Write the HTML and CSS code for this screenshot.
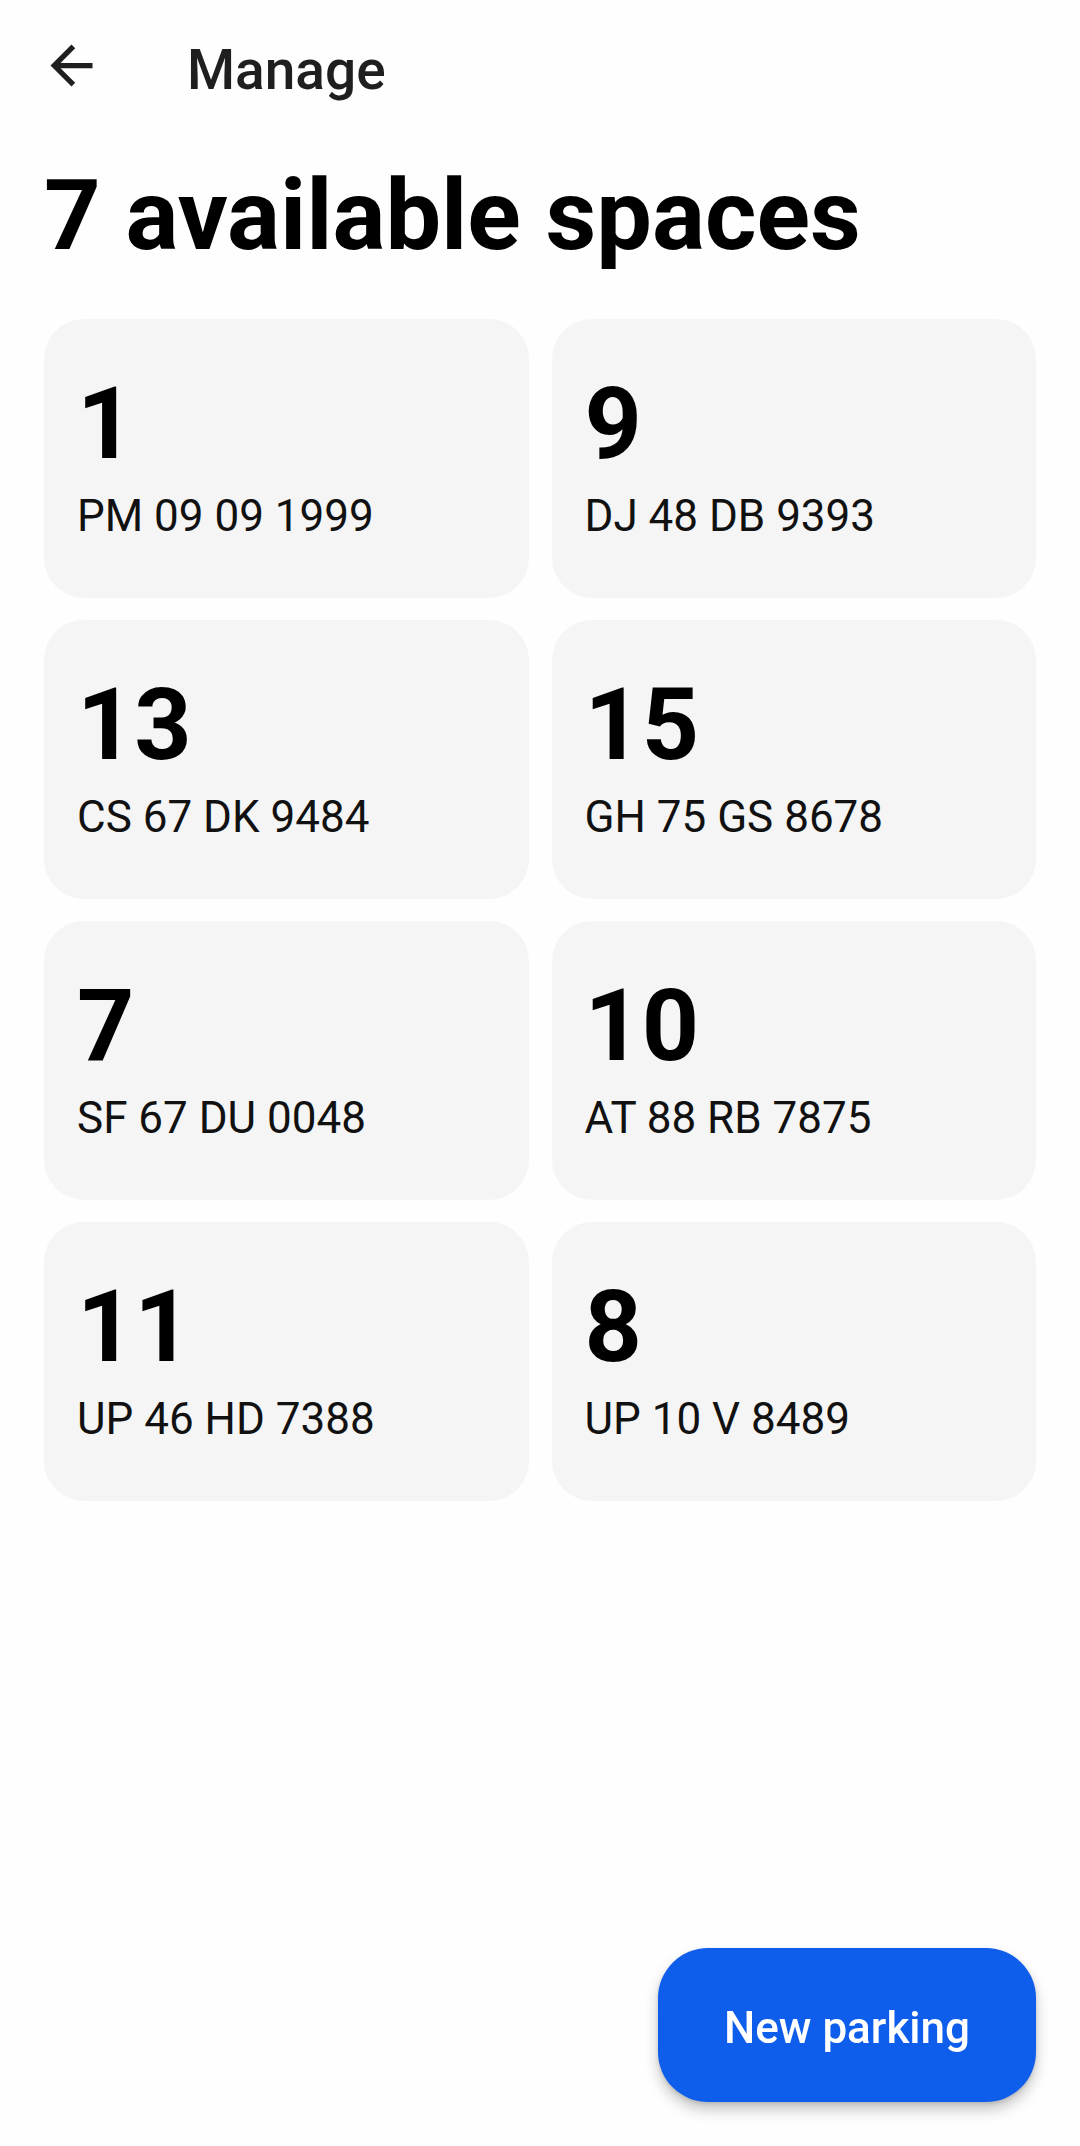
FILE: index.html
```html
<!DOCTYPE html>
<html lang="en">
<head>
<meta charset="utf-8">
<title>Manage</title>
<link rel="stylesheet" href="styles.css">
</head>
<body>
<header class="toolbar">
  <svg class="back" viewBox="0 0 24 24" aria-hidden="true"><path d="M20 11H7.83l5.59-5.59L12 4l-8 8 8 8 1.41-1.41L7.83 13H20v-2z"/></svg>
  <span class="title">Manage</span>
</header>
<main class="content">
  <h1 class="heading">7 available spaces</h1>
  <div class="grid">
    <div class="card"><div class="num">1</div><div class="plate">PM 09 09 1999</div></div>
    <div class="card"><div class="num">9</div><div class="plate">DJ 48 DB 9393</div></div>
    <div class="card"><div class="num">13</div><div class="plate">CS 67 DK 9484</div></div>
    <div class="card"><div class="num">15</div><div class="plate">GH 75 GS 8678</div></div>
    <div class="card"><div class="num">7</div><div class="plate">SF 67 DU 0048</div></div>
    <div class="card"><div class="num">10</div><div class="plate">AT 88 RB 7875</div></div>
    <div class="card"><div class="num">11</div><div class="plate">UP 46 HD 7388</div></div>
    <div class="card"><div class="num">8</div><div class="plate">UP 10 V 8489</div></div>
  </div>
</main>
<button class="fab">New parking</button>
</body>
</html>
```
FILE: styles.css
```css
html, body {
  margin: 0;
  padding: 0;
  background: #fefefe;
  font-family: Roboto, "Noto Sans", sans-serif;
}
.toolbar {
  display: flex;
  align-items: flex-start;
  padding: 34px 0 0 40px;
  height: 63px;
}
.back {
  width: 63px;
  height: 63px;
  fill: #1f1f1f;
  flex: none;
}
.title {
  margin: 5px 0 0 84px;
  font-size: 55px;
  line-height: 63px;
  font-weight: 500;
  color: #1f1f1f;
}
.content {
  padding: 0 44px;
}
.heading {
  margin: 68px 0 54px;
  font-size: 99px;
  line-height: 100px;
  font-weight: 700;
  color: #000;
}
.grid {
  display: grid;
  grid-template-columns: 1fr 1fr;
  gap: 22px 23px;
}
.card {
  background: #f5f5f5;
  border-radius: 40px;
  height: 279px;
  box-sizing: border-box;
  padding: 55px 33px 0;
}
.num {
  font-size: 100px;
  line-height: 100px;
  font-weight: 700;
  color: #000;
}
.plate {
  margin-top: 17px;
  font-size: 44px;
  line-height: 50px;
  color: #111;
}
.fab {
  position: fixed;
  right: 44px;
  bottom: 44px;
  width: 378px;
  height: 154px;
  padding: 5px 0 0;
  border: none;
  border-radius: 50px;
  background: #0f5eeb;
  color: #fff;
  font-family: Roboto, "Noto Sans", sans-serif;
  font-size: 44px;
  font-weight: 500;
  box-shadow: 0 8px 14px rgba(0, 0, 0, 0.22), 0 2px 4px rgba(0, 0, 0, 0.12);
}
```
